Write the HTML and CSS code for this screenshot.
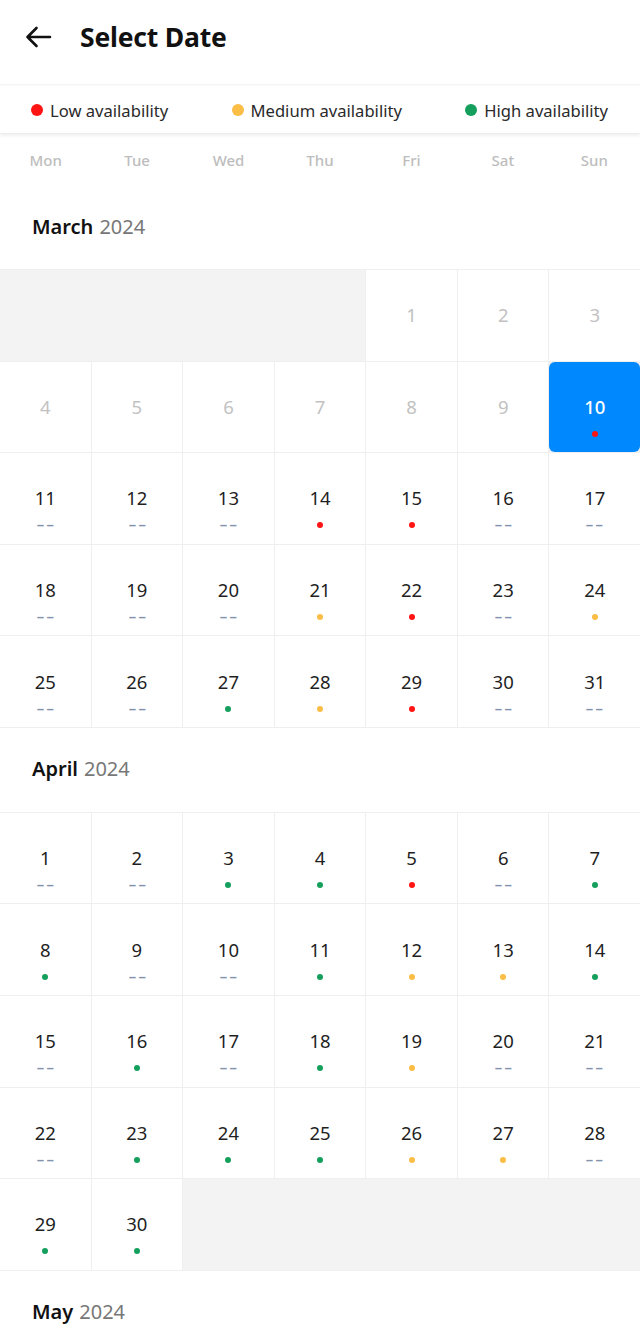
FILE: index.html
```html
<!DOCTYPE html>
<html lang="en">
<head>
<meta charset="utf-8">
<title>Select Date</title>
<link rel="stylesheet" href="styles.css">
</head>
<body>
<header class="topbar">
  <svg class="back" viewBox="0 0 28 24" width="28" height="24" aria-hidden="true">
    <path d="M26 12H3.5M12.5 3L3.5 12l9 9" fill="none" stroke="#111" stroke-width="2.6" stroke-linecap="round" stroke-linejoin="round"/>
  </svg>
  <h1 class="title">Select Date</h1>
</header>
<div class="legend">
  <span class="legend-item"><i class="ldot low"></i>Low availability</span>
  <span class="legend-item"><i class="ldot med"></i>Medium availability</span>
  <span class="legend-item"><i class="ldot high"></i>High availability</span>
</div>
<div class="weekdays">
  <span>Mon</span><span>Tue</span><span>Wed</span><span>Thu</span><span>Fri</span><span>Sat</span><span>Sun</span>
</div>

<section class="month">
  <h2 class="month-title"><b>March</b> <span>2024</span></h2>
  <div class="days">
    <div class="empty span4"></div>
    <div class="day past"><span class="num">1</span></div>
    <div class="day past"><span class="num">2</span></div>
    <div class="day past"><span class="num">3</span></div>
    <div class="day past"><span class="num">4</span></div>
    <div class="day past"><span class="num">5</span></div>
    <div class="day past"><span class="num">6</span></div>
    <div class="day past"><span class="num">7</span></div>
    <div class="day past"><span class="num">8</span></div>
    <div class="day past"><span class="num">9</span></div>
    <div class="day selected"><span class="num">10</span><i class="dot low"></i></div>
    <div class="day"><span class="num">11</span><span class="na">--</span></div>
    <div class="day"><span class="num">12</span><span class="na">--</span></div>
    <div class="day"><span class="num">13</span><span class="na">--</span></div>
    <div class="day"><span class="num">14</span><i class="dot low"></i></div>
    <div class="day"><span class="num">15</span><i class="dot low"></i></div>
    <div class="day"><span class="num">16</span><span class="na">--</span></div>
    <div class="day"><span class="num">17</span><span class="na">--</span></div>
    <div class="day"><span class="num">18</span><span class="na">--</span></div>
    <div class="day"><span class="num">19</span><span class="na">--</span></div>
    <div class="day"><span class="num">20</span><span class="na">--</span></div>
    <div class="day"><span class="num">21</span><i class="dot med"></i></div>
    <div class="day"><span class="num">22</span><i class="dot low"></i></div>
    <div class="day"><span class="num">23</span><span class="na">--</span></div>
    <div class="day"><span class="num">24</span><i class="dot med"></i></div>
    <div class="day"><span class="num">25</span><span class="na">--</span></div>
    <div class="day"><span class="num">26</span><span class="na">--</span></div>
    <div class="day"><span class="num">27</span><i class="dot high"></i></div>
    <div class="day"><span class="num">28</span><i class="dot med"></i></div>
    <div class="day"><span class="num">29</span><i class="dot low"></i></div>
    <div class="day"><span class="num">30</span><span class="na">--</span></div>
    <div class="day"><span class="num">31</span><span class="na">--</span></div>
  </div>
</section>

<section class="month">
  <h2 class="month-title"><b>April</b> <span>2024</span></h2>
  <div class="days">
    <div class="day"><span class="num">1</span><span class="na">--</span></div>
    <div class="day"><span class="num">2</span><span class="na">--</span></div>
    <div class="day"><span class="num">3</span><i class="dot high"></i></div>
    <div class="day"><span class="num">4</span><i class="dot high"></i></div>
    <div class="day"><span class="num">5</span><i class="dot low"></i></div>
    <div class="day"><span class="num">6</span><span class="na">--</span></div>
    <div class="day"><span class="num">7</span><i class="dot high"></i></div>
    <div class="day"><span class="num">8</span><i class="dot high"></i></div>
    <div class="day"><span class="num">9</span><span class="na">--</span></div>
    <div class="day"><span class="num">10</span><span class="na">--</span></div>
    <div class="day"><span class="num">11</span><i class="dot high"></i></div>
    <div class="day"><span class="num">12</span><i class="dot med"></i></div>
    <div class="day"><span class="num">13</span><i class="dot med"></i></div>
    <div class="day"><span class="num">14</span><i class="dot high"></i></div>
    <div class="day"><span class="num">15</span><span class="na">--</span></div>
    <div class="day"><span class="num">16</span><i class="dot high"></i></div>
    <div class="day"><span class="num">17</span><span class="na">--</span></div>
    <div class="day"><span class="num">18</span><i class="dot high"></i></div>
    <div class="day"><span class="num">19</span><i class="dot med"></i></div>
    <div class="day"><span class="num">20</span><span class="na">--</span></div>
    <div class="day"><span class="num">21</span><span class="na">--</span></div>
    <div class="day"><span class="num">22</span><span class="na">--</span></div>
    <div class="day"><span class="num">23</span><i class="dot high"></i></div>
    <div class="day"><span class="num">24</span><i class="dot high"></i></div>
    <div class="day"><span class="num">25</span><i class="dot high"></i></div>
    <div class="day"><span class="num">26</span><i class="dot med"></i></div>
    <div class="day"><span class="num">27</span><i class="dot med"></i></div>
    <div class="day"><span class="num">28</span><span class="na">--</span></div>
    <div class="day"><span class="num">29</span><i class="dot high"></i></div>
    <div class="day"><span class="num">30</span><i class="dot high"></i></div>
    <div class="empty span5"></div>
  </div>
</section>

<section class="month">
  <h2 class="month-title"><b>May</b> <span>2024</span></h2>
</section>
</body>
</html>
```
FILE: styles.css
```css
* { box-sizing: border-box; }

html, body {
  margin: 0;
  padding: 0;
  background: #fff;
}

body {
  font-family: "Noto Sans", "Open Sans", sans-serif;
  color: #1c1c1c;
  width: 640px;
}

.topbar {
  height: 84px;
  display: flex;
  align-items: center;
  padding-left: 24px;
  gap: 28px;
  background: #fff;
  box-shadow: 0 1px 2px rgba(0, 0, 0, 0.06);
  position: relative;
  z-index: 2;
}

.back {
  display: block;
  margin-top: -10px;
}

.title {
  margin: 0 0 10px;
  font-size: 26.5px;
  font-weight: 700;
  letter-spacing: -0.2px;
  color: #111;
}

.legend {
  height: 49px;
  margin-top: 1px;
  padding: 2px 32px 0 31px;
  display: flex;
  align-items: center;
  justify-content: space-between;
  font-size: 16.6px;
  color: #2a2a2a;
  box-shadow: 0 2px 3px rgba(0, 0, 0, 0.06);
  border-bottom: 1px solid #ececec;
  position: relative;
  z-index: 1;
}

.legend-item {
  display: flex;
  align-items: center;
  gap: 7px;
}

.ldot {
  width: 12px;
  height: 12px;
  border-radius: 50%;
  display: block;
}

.low { background: #ff1414; }
.med { background: #fbbd45; }
.high { background: #14a05c; }

.weekdays {
  height: 51px;
  display: grid;
  grid-template-columns: repeat(7, 1fr);
  align-items: center;
  justify-items: center;
  font-size: 15px;
  font-weight: 500;
  color: #bdbdbd;
}

.month-title {
  margin: 0;
  height: 85px;
  padding-bottom: 3px;
  display: flex;
  align-items: center;
  gap: 6px;
  padding-left: 32px;
  font-size: 20px;
  font-weight: 400;
}

.month-title b {
  font-weight: 600;
  color: #111;
}

.month-title span {
  color: #777;
}

.days {
  display: grid;
  grid-template-columns: repeat(7, 1fr);
  gap: 1px;
  background: #efefef;
  border-top: 1px solid #efefef;
  border-bottom: 1px solid #efefef;
  margin-top: -1px;
}

.empty {
  background: #f3f3f3;
}
.span4 { grid-column: span 4; }
.span5 { grid-column: span 5; }

.day {
  aspect-ratio: 1 / 1;
  background: #fff;
  display: grid;
  grid-template-rows: 1fr auto 1fr;
  justify-items: center;
}

.num {
  grid-row: 2;
  font-size: 18.5px;
  line-height: 24px;
  color: #1f1f1f;
}

.past .num {
  color: #c2c2c2;
}

.dot, .na {
  grid-row: 3;
  align-self: start;
}

.dot {
  display: block;
  width: 6px;
  height: 6px;
  border-radius: 50%;
  margin-top: 12px;
}

.na {
  display: inline-block;
  font-size: 18px;
  line-height: 10px;
  margin-top: 9px;
  letter-spacing: 1px;
  padding-left: 1px;
  color: #8293ad;
  transform: scaleX(1.45);
}

.selected {
  background: #0088ff;
  border-radius: 6px;
}

.selected .num {
  color: #fff;
  font-weight: 500;
}
```
